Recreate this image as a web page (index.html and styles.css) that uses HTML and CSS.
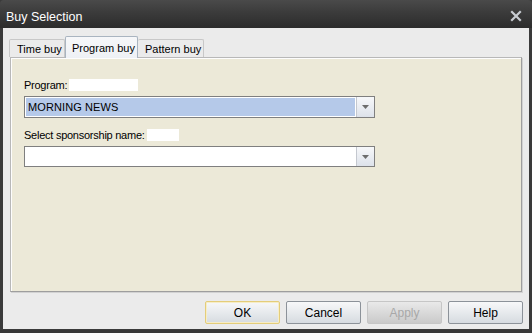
FILE: index.html
```html
<!DOCTYPE html>
<html>
<head>
<meta charset="utf-8">
<link rel="stylesheet" href="styles.css">
</head>
<body>
<div class="window">
  <div class="titlebar">
    <span class="title">Buy Selection</span>
    <svg class="close" width="12" height="12" viewBox="0 0 12 12"><path d="M2 2 L10 10 M10 2 L2 10" stroke="#c8ccd2" stroke-width="2.2" stroke-linecap="square"/></svg>
  </div>
  <div class="client">
    <div class="tabs">
      <div class="tab first">Time buy</div>
      <div class="tab active">Program buy</div>
      <div class="tab">Pattern buy</div>
    </div>
    <div class="panel">
      <div class="label-row">
        <span class="label">Program:</span>
        <span class="blank w-program"></span>
      </div>
      <div class="combo">
        <div class="combo-field"><span class="selected">MORNING NEWS</span></div>
        <div class="combo-btn"><svg width="7" height="4" viewBox="0 0 7 4"><path d="M0 0 H7 L3.5 4 Z" fill="#6d6d6d"/></svg></div>
      </div>
      <div class="label-row second">
        <span class="label">Select sponsorship name:</span>
        <span class="blank w-sponsor"></span>
      </div>
      <div class="combo short">
        <div class="combo-field"></div>
        <div class="combo-btn"><svg width="7" height="4" viewBox="0 0 7 4"><path d="M0 0 H7 L3.5 4 Z" fill="#6d6d6d"/></svg></div>
      </div>
    </div>
    <div class="buttons">
      <div class="btn default">OK</div>
      <div class="btn">Cancel</div>
      <div class="btn disabled">Apply</div>
      <div class="btn">Help</div>
    </div>
  </div>
</div>
</body>
</html>
```
FILE: styles.css
```css
html, body {
  margin: 0;
  padding: 0;
  background: #2f2f2f;
}
body {
  font-family: "Liberation Sans", Arial, sans-serif;
  font-size: 11px;
  color: #000;
}
.window {
  width: 532px;
  height: 333px;
  display: flex;
  flex-direction: column;
  background: #3a3a3a;
  box-sizing: border-box;
}
.titlebar {
  height: 28px;
  display: flex;
  align-items: center;
  justify-content: space-between;
  padding: 0 10px 0 6px;
  background: linear-gradient(#4a4a4a 0%, #3b3b3b 45%, #2c2c2c 100%);
  border-radius: 4px 4px 0 0;
  color: #fff;
  box-sizing: border-box;
}
.title {
  font-size: 12.5px;
  padding-top: 5px;
}
.close {
  margin-top: 3px;
}
.client {
  flex: 1;
  margin: 0 3px 4px 3px;
  background: #ebebeb;
  display: flex;
  flex-direction: column;
  padding-top: 7px;
}
.tabs {
  display: flex;
  align-items: flex-end;
  padding-left: 6px;
  height: 22px;
  position: relative;
  z-index: 1;
}
.tab {
  height: 18px;
  box-sizing: border-box;
  padding: 3px 6px 0 7px;
  border: 1px solid #c8c8c8;
  border-bottom: none;
  border-left: none;
  border-radius: 2px 2px 0 0;
  background: #ebebeb;
  white-space: nowrap;
}
.tab.first {
  border-left: 1px solid #c8c8c8;
  width: 56px;
}
.tab.active {
  height: 22px;
  width: 73px;
  margin-bottom: -1px;
  padding-top: 5px;
  padding-left: 6px;
  border: 1px solid #a9b4c0;
  border-bottom: none;
  background: linear-gradient(#f6f7f9, #eef1f5);
}
.tab:last-child {
  width: 66px;
}
.panel {
  margin: 0 7px;
  height: 235px;
  box-sizing: border-box;
  border: 1px solid #b8b8b8;
  border-right-color: #9e9e9e;
  border-bottom-color: #9e9e9e;
  box-shadow: inset 1px 1px 0 #fdfdfd, 1px 1px 0 #d2d2d2;
  background: #ece9d8;
  padding: 21px 0 0 13px;
}
.label-row {
  display: flex;
  align-items: center;
  height: 12px;
  gap: 2px;
}
.label-row.second {
  margin-top: 11px;
}
.label {
  line-height: 12px;
  letter-spacing: -0.25px;
}
.blank {
  display: inline-block;
  height: 12px;
  background: #fff;
}
.w-program { width: 69px; }
.w-sponsor { width: 32px; }
.combo {
  margin-top: 5px;
  width: 351px;
  height: 22px;
  box-sizing: border-box;
  border: 1px solid #7f7f7f;
  background: #fff;
  display: flex;
  padding: 1px;
}
.combo.short {
  height: 21px;
  margin-top: 5px;
}
.combo-field {
  flex: 1;
  display: flex;
  align-items: center;
}
.selected {
  display: flex;
  align-items: center;
  width: 100%;
  height: 100%;
  background: #b5c9e9;
  padding-left: 2px;
  font-size: 11px;
  letter-spacing: 0.1px;
}
.combo-btn {
  width: 17px;
  margin: -1px -1px -1px 1px;
  border-left: 1px solid #c4c8cf;
  background: linear-gradient(#f7f8fa, #dde2ea);
  display: flex;
  align-items: center;
  justify-content: center;
}
.buttons {
  display: flex;
  justify-content: flex-end;
  gap: 6px;
  padding: 9px 6px 0 0;
}
.btn {
  width: 75px;
  height: 23px;
  box-sizing: border-box;
  border: 1px solid #8c9299;
  border-radius: 2px;
  background: linear-gradient(#f7f8f9 0%, #e7eaed 50%, #d6dbe0 100%);
  display: flex;
  align-items: center;
  justify-content: center;
  font-size: 12px;
  color: #000;
}
.btn.default {
  border-color: #e4cd7a;
  box-shadow: inset 0 0 0 1px #f6edc8;
}
.btn.disabled {
  color: #a8a8a8;
  border-color: #c6c6c6;
  background: linear-gradient(#e9e9e9 0%, #d6d6d6 60%, #cacaca 100%);
}
```
